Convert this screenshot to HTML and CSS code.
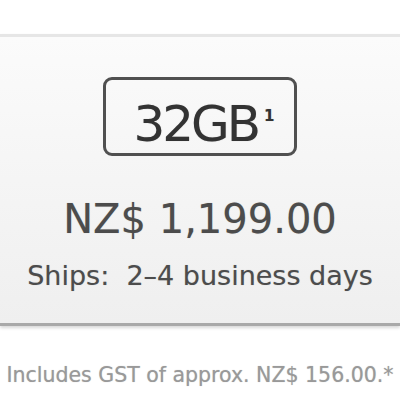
FILE: index.html
```html
<!DOCTYPE html>
<html>
<head>
  <meta charset='utf-8' />
  <title>32GB</title>
  <link rel="stylesheet" href="styles.css">
</head>
<body>
  <div class="top"></div>
  <div class="panel">
    <div class="capacity">32GB<sup>1</sup></div>
    <div class="price">NZ$ 1,199.00</div>
    <div class="ships">Ships:&nbsp; 2–4 business days</div>
  </div>
  <div class="note">Includes GST of approx. NZ$ 156.00.*</div>
</body>
</html>
```

FILE: styles.css
```css
body {
  margin: 0;
  background: #fff;
  font-family: "DejaVu Sans", sans-serif;
  color: #4c4c4c;
  text-shadow: 0 0 1px rgba(0, 0, 0, 0.25);
}
.top {
  height: 34px;
}
.panel {
  border-top: 3px solid #e6e6e6;
  border-bottom: 3px solid #a9a9a9;
  background: linear-gradient(#fbfbfb, #efefef);
  height: 286px;
  display: flex;
  flex-direction: column;
  align-items: center;
  box-shadow: 0 2px 3px #d8d8d8;
}
.capacity {
  margin-top: 40px;
  width: 180px;
  height: 73px;
  padding-left: 8px;
  border: 3px solid #505050;
  border-radius: 9px;
  font-size: 50px;
  letter-spacing: -3px;
  line-height: 73px;
  text-align: center;
  color: #333;
  box-sizing: content-box;
}
.capacity sup {
  font-size: 15px;
  font-weight: bold;
  letter-spacing: 0;
  vertical-align: 20px;
  margin-left: 6px;
}
.price {
  margin-top: 39px;
  font-size: 40px;
  line-height: 48px;
}
.ships {
  margin-top: 16px;
  font-size: 27px;
  line-height: 34px;
}
.note {
  margin-top: 37px;
  font-size: 20.5px;
  color: #999;
  text-align: center;
}
```
